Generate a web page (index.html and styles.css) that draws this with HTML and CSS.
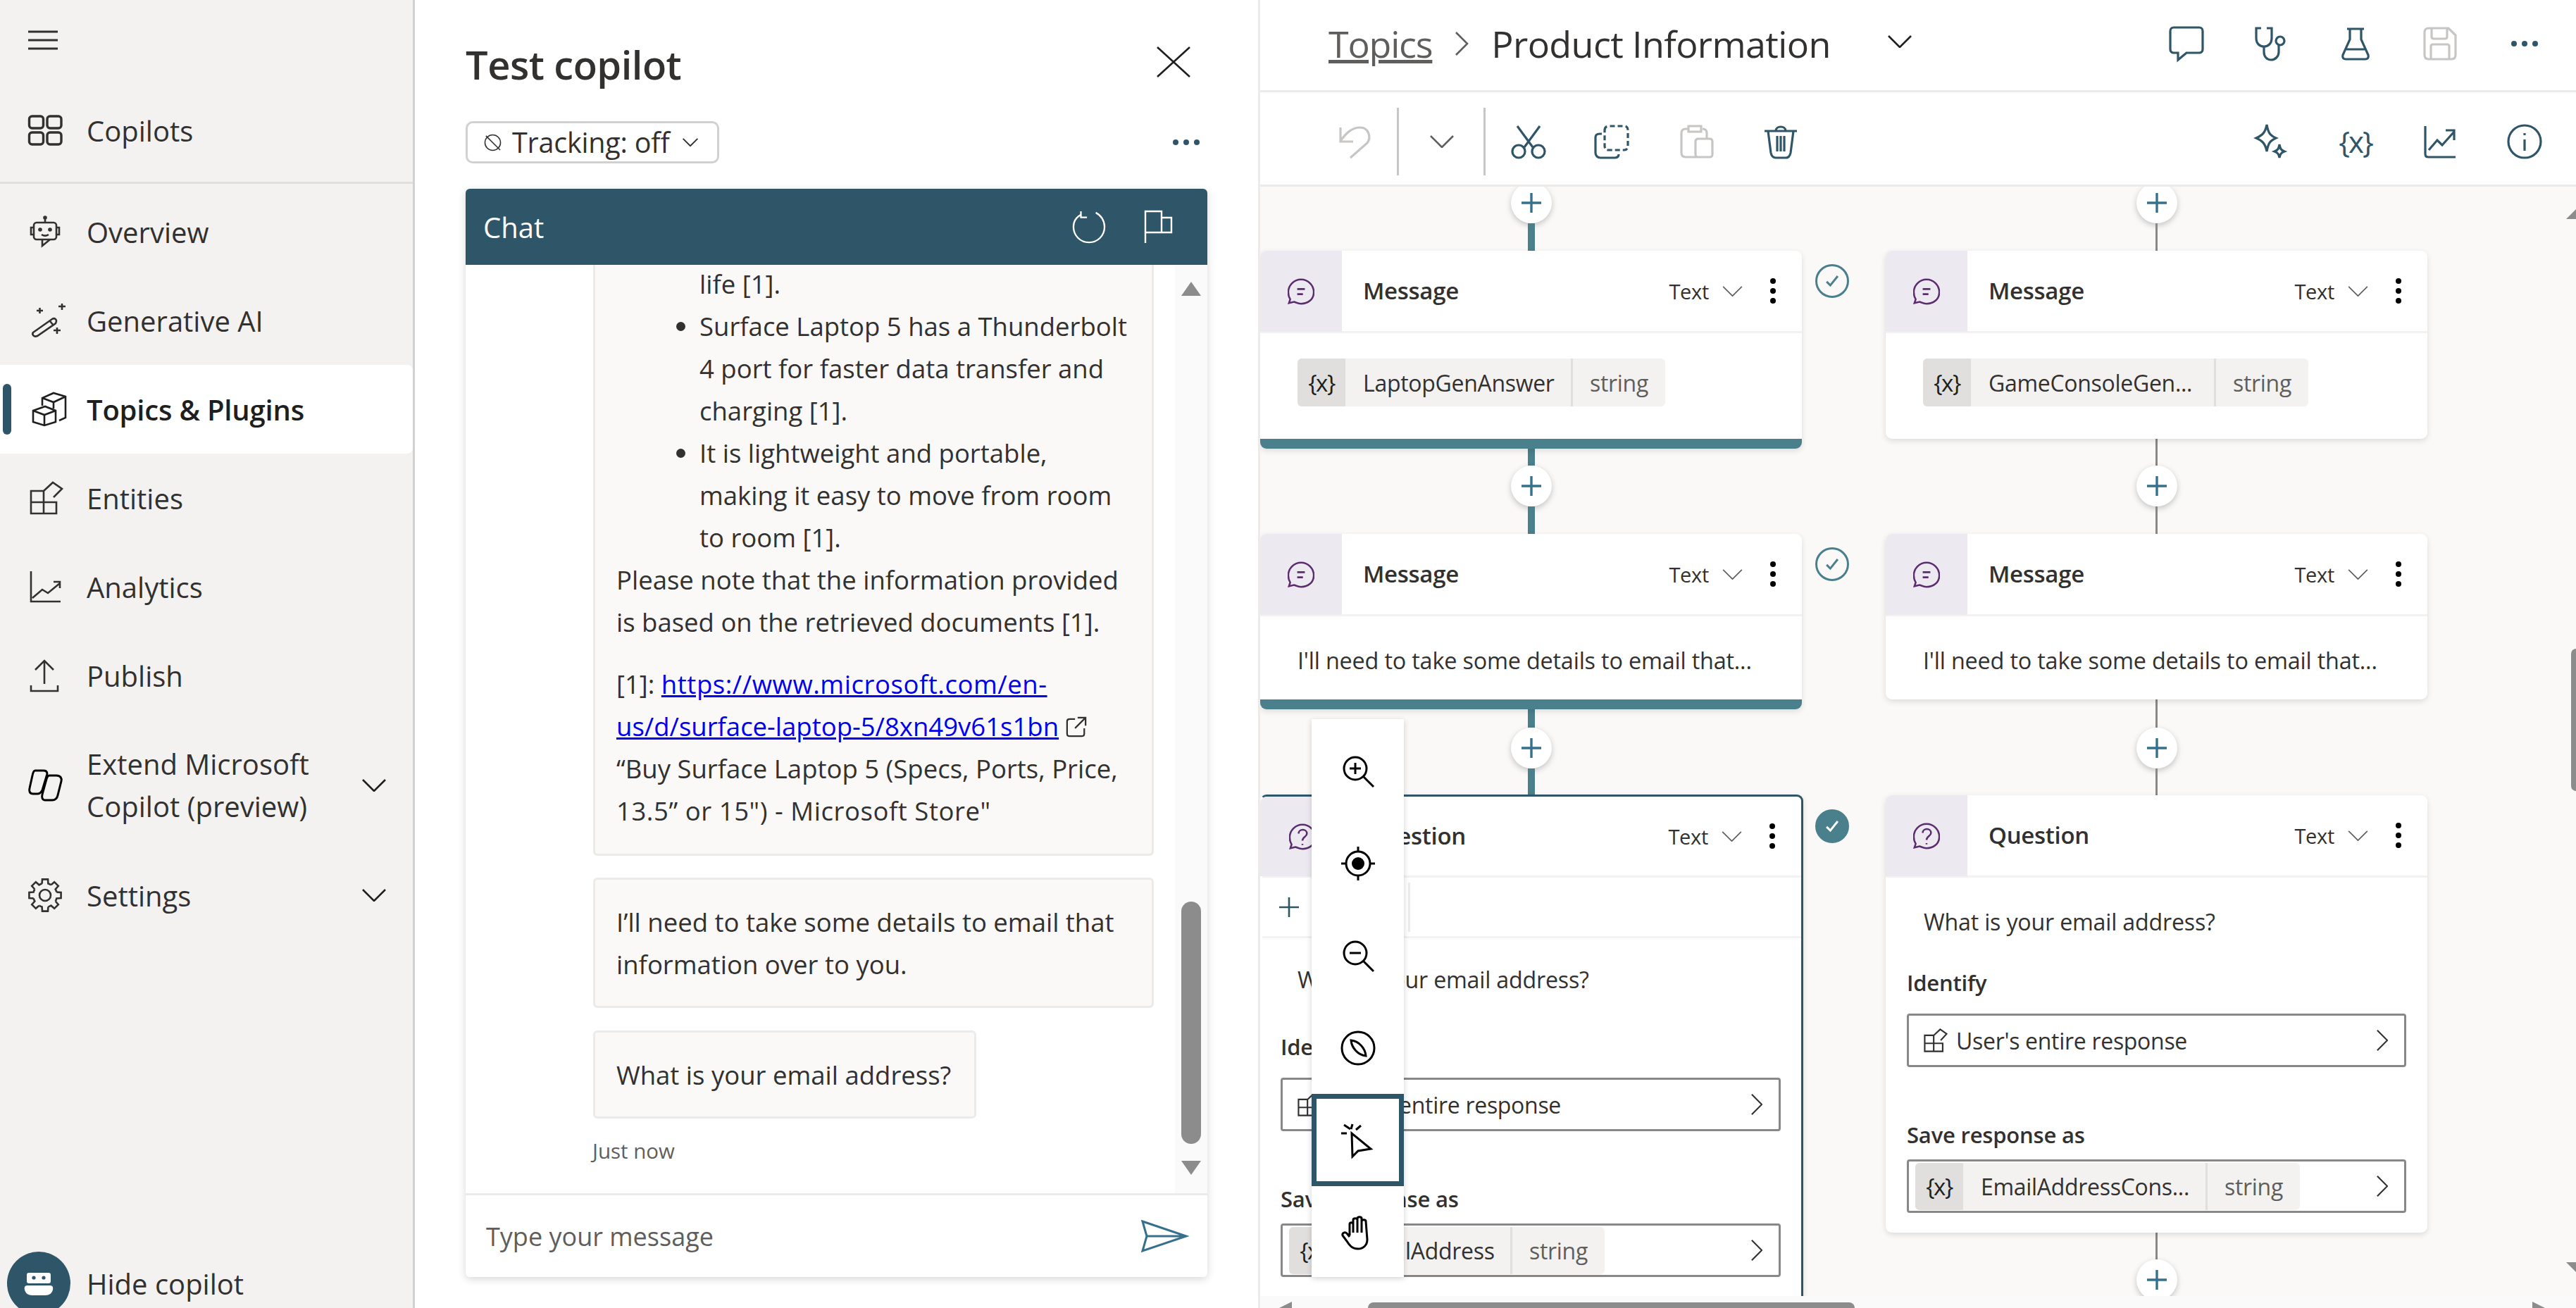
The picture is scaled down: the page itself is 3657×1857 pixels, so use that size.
FILE: index.html
```html
<!DOCTYPE html>
<html lang="en">
<head>
<meta charset="utf-8">
<title>Test copilot - Product Information</title>
<link rel="stylesheet" href="styles.css">
</head>
<body>
<svg class="defs" width="0" height="0">
  <defs>
    <symbol id="i-chev-d" viewBox="0 0 34 18"><path d="M1 1 17 17 33 1"/></symbol>
    <symbol id="i-chev-r" viewBox="0 0 18 34"><path d="M1 1 17 17 1 33"/></symbol>
    <symbol id="i-plus" viewBox="0 0 28 28"><path d="M14 0V28M0 14H28"/></symbol>
    <symbol id="i-msg" viewBox="0 0 42 40"><path d="M2 38 4 32C2 29 1 25 1 21 1 10 10 1 21 1S41 10 41 21 32 39 21 39C17 39 13 37 10 36Z"/><path d="M15 16H27M15 24H24"/></symbol>
    <symbol id="i-q" viewBox="0 0 42 40"><path d="M2 38 4 32C2 29 1 25 1 21 1 10 10 1 21 1S41 10 41 21 32 39 21 39C17 39 13 37 10 36Z"/><path d="M15 15C15 7 28 7 28 15 28 20 21 20 21 26M21 31V33"/></symbol>
    <symbol id="i-entity" viewBox="0 0 48 48"><path d="M2 14H20V46H2ZM2 30H38V46H20M20 14 33 2 46 11 34 24"/></symbol>
    <symbol id="i-check" viewBox="0 0 48 48"><path d="M15 25 21 31 33 16"/></symbol>
    <symbol id="i-hook" viewBox="0 0 48 48"><path id="gear-seg" d="M40.4 19.6 46.6 20V28L40.4 28.4A17 17 0 0 1 38.7 32.5"/></symbol>
  </defs>
</svg>

<div class="app">
  <nav class="sidebar">
    <div class="hamburger"><svg class="ic-menu" viewBox="0 0 42 26"><path d="M0 1H42M0 13H42M0 25H42"/></svg></div>
    <div class="nav-item nav-first">
      <svg class="nav-ic" viewBox="0 0 48 48"><rect x="1.5" y="4" width="20" height="17" rx="4"/><rect x="27" y="4" width="20" height="17" rx="4"/><rect x="1.5" y="27" width="20" height="17" rx="4"/><rect x="27" y="27" width="20" height="17" rx="4"/></svg>
      <span>Copilots</span>
    </div>
    <div class="nav-rule"></div>
    <div class="nav-item">
      <svg class="nav-ic" viewBox="0 0 48 48"><rect x="8" y="11" width="32" height="24" rx="4"/><path d="M8 18H4V28H8M40 18H44V28H40M24 11V6M20 35 20 44 31 35M19 28C22 30 26 30 29 28"/><circle cx="24" cy="4" r="1.5"/><circle cx="17" cy="21" r="1.5"/><circle cx="31" cy="21" r="1.5"/></svg>
      <span>Overview</span>
    </div>
    <div class="nav-item">
      <svg class="nav-ic" viewBox="-6 0 48 48"><path d="M1 41 28 22C31 20 36 22 33 28L7 46C2 48-1 44 1 41ZM25 25 30 31M6 10H15M10.500 6V14M37 4H47M42 0V9M30 38H40M35 34V43"/></svg>
      <span>Generative AI</span>
    </div>
    <div class="nav-item nav-active">
      <svg class="nav-ic" viewBox="-6 0 48 48"><path d="M1 26 18 20 33 26V42L17 47 1 42ZM1 26 17 32 33 26M17 32V47M14 19V8L30 1 47 6V36L38 40M14 8 30 14 47 6M30 14V23"/></svg>
      <span>Topics &amp; Plugins</span>
    </div>
    <div class="nav-item">
      <svg class="nav-ic" viewBox="-3 0 48 48"><path d="M1 14H19V46H1ZM1 30H37V46H19M19 14 32 2 45 11 33 23"/></svg>
      <span>Entities</span>
    </div>
    <div class="nav-item">
      <svg class="nav-ic" viewBox="-3 0 48 48"><path d="M1 2V45H43M3 40 17 28 25 33 42 19M33 17H42V26"/></svg>
      <span>Analytics</span>
    </div>
    <div class="nav-item">
      <svg class="nav-ic" viewBox="-3 0 48 48"><path d="M20 36V3M7 16 20 3 33 16M1 38V46H39V38"/></svg>
      <span>Publish</span>
    </div>
    <div class="nav-item nav-tall">
      <svg class="nav-ic nav-logo" viewBox="0 0 48 48"><path d="M10 3H22C27 3 28 7 26 11L20 31C18 35 16 36 13 36H7C2 36 1 32 2 28L6 10C7 5 8 3 10 3ZM30 10H40C46 10 48 14 47 18L42 38C41 43 38 45 34 45H24C20 45 19 41 20 37L26 15C27 12 28 10 30 10Z"/></svg>
      <span class="nav-grow">Extend Microsoft<br>Copilot (preview)</span>
      <svg class="nav-chev"><use href="#i-chev-d"/></svg>
    </div>
    <div class="nav-item">
      <svg class="nav-ic" viewBox="0 0 48 48"><g id="gear"><use href="#gear-seg"/><use href="#gear-seg" transform="rotate(45 24 24)"/><use href="#gear-seg" transform="rotate(90 24 24)"/><use href="#gear-seg" transform="rotate(135 24 24)"/><use href="#gear-seg" transform="rotate(180 24 24)"/><use href="#gear-seg" transform="rotate(225 24 24)"/><use href="#gear-seg" transform="rotate(270 24 24)"/><use href="#gear-seg" transform="rotate(315 24 24)"/></g><circle cx="24" cy="24" r="8"/></svg>
      <span class="nav-grow">Settings</span>
      <svg class="nav-chev"><use href="#i-chev-d"/></svg>
    </div>
    <div class="hide-copilot">
      <div class="avatar"><svg class="avatar-ic" viewBox="0 0 42 34"><path class="solid" d="M7 2H35A3 3 0 0 1 38 5V14A3 3 0 0 1 35 17H7A3 3 0 0 1 4 14V5A3 3 0 0 1 7 2ZM5 20H37C40 20 42 22 41 26 40 31 36 34 30 34H12C6 34 2 31 1 26 0 22 2 20 5 20Z"/><circle class="eye" cx="14" cy="9" r="2.6"/><circle class="eye" cx="28" cy="9" r="2.6"/></svg></div>
      <span>Hide copilot</span>
    </div>
  </nav>

  <section class="chat-pane">
    <header class="chat-title">
      <h1>Test copilot</h1>
      <svg class="ic-close" viewBox="0 0 48 44"><path d="M1 1 47 43M47 1 1 43"/></svg>
    </header>
    <div class="chat-tools">
      <button class="track"><svg class="ic-track" viewBox="0 0 26 26"><circle cx="13" cy="13" r="11.500"/><path d="M3 3 24 24"/></svg>Tracking: off<svg class="ic-track-chev"><use href="#i-chev-d"/></svg></button>
      <div class="dots"><i></i><i></i><i></i></div>
    </div>
    <div class="chat-frame">
      <div class="chat-head">
        <span>Chat</span>
        <svg class="ic-refresh" viewBox="0 0 48 48"><path d="M12 6C5 10 1 17 1 24 1 37 11 47 24 47S47 37 47 24C47 15 42 7 34 3M12 1V10H21"/></svg>
        <svg class="ic-flag" viewBox="0 0 40 46"><path d="M2 46V1H25V31H2M25 10H39V31H25"/></svg>
      </div>
      <div class="chat-body">
        <div class="chat-log">
          <div class="bubble bubble-top">
            <ul class="bul">
              <li class="cont">life [1].</li>
              <li>Surface Laptop 5 has a Thunderbolt<br>4 port for faster data transfer and<br>charging [1].</li>
              <li>It is lightweight and portable,<br>making it easy to move from room<br>to room [1].</li>
            </ul>
            <p>Please note that the information provided<br>is based on the retrieved documents [1].</p>
            <p class="refs">[1]: <a href="#"><span class="url-head">https://www.microsoft.com/en-</span><br>us/d/surface-laptop-5/8xn49v61s1bn</a> <svg class="ic-ext" viewBox="0 0 32 32"><path d="M14 4H6C3 4 2 5 2 8V26C2 29 3 30 6 30H24C27 30 28 29 28 26V18M18 2H30V14M30 2 14 18"/></svg><br>“Buy Surface Laptop 5 (Specs, Ports, Price,<br><span class="url-head">13.5” or 15") - Microsoft Store"</span></p>
          </div>
          <div class="bubble">I’ll need to take some details to email that<br>information over to you.</div>
          <div class="bubble bubble-fit">What is your email address?</div>
          <div class="stamp">Just now</div>
        </div>
        <div class="chat-scroll">
          <div class="arrow-up"></div>
          <div class="thumb"></div>
          <div class="arrow-down"></div>
        </div>
      </div>
      <div class="chat-input">
        <span>Type your message</span>
        <svg class="ic-send" viewBox="0 0 66 46"><path d="M2 2 64 23 2 44 8 23ZM8 23H64"/></svg>
      </div>
    </div>
  </section>

  <main class="editor">
    <div class="crumbs">
      <a class="crumb-link" href="#">Topics</a>
      <svg class="crumb-sep"><use href="#i-chev-r"/></svg>
      <span class="crumb-cur">Product Information</span>
      <svg class="crumb-chev"><use href="#i-chev-d"/></svg>
      <div class="tools tools-right">
        <svg class="tool" viewBox="0 0 48 48"><path d="M6 1H42C45 1 47 3 47 6V32C47 35 45 37 42 37H24L12 47V37H6C3 37 1 35 1 32V6C1 3 3 1 6 1Z"/></svg>
        <svg class="tool" viewBox="0 0 48 48"><path d="M10 2H3V16C3 24 8 28 14 28S25 24 25 16V2H18M14 28V36C14 42 18 47 24 47S35 42 35 36V26"/><circle cx="37" cy="20" r="6"/></svg>
        <svg class="tool" viewBox="0 0 48 48"><path d="M12 3H36M16 3V18L6 40C5 44 7 46 10 46H38C41 46 43 44 42 40L32 18V3M11 32H37"/></svg>
        <svg class="tool tool-off" viewBox="0 0 48 48"><path d="M8 2H36L46 12V40C46 44 44 46 40 46H8C4 46 2 44 2 40V8C2 4 4 2 8 2ZM12 2V14C12 16 13 17 15 17H31C33 17 34 16 34 14V2M11 46V28C11 26 12 25 14 25H34C36 25 37 26 37 28V46"/></svg>
        <div class="dots dots-top"><i></i><i></i><i></i></div>
      </div>
    </div>
    <div class="toolbar">
      <svg class="tool tool-off tool-undo" viewBox="0 0 48 48"><path d="M4 4V24H22M4 23C12 12 20 4 32 4 44 4 48 18 42 26L18 47" /></svg>
      <span class="tool-rule"></span>
      <svg class="tool-chev"><use href="#i-chev-d"/></svg>
      <span class="tool-rule"></span>
      <svg class="tool tool-cut" viewBox="0 0 48 48"><path d="M8 2 30 32M40 2 18 32"/><circle cx="10" cy="38" r="9"/><circle cx="38" cy="38" r="9"/></svg>
      <svg class="tool tool-copy" viewBox="0 0 48 48"><path stroke-dasharray="7 4" d="M14 8C14 4 16 2 20 2H42C45 2 47 4 47 8V30C47 34 45 36 42 36H20C16 36 14 34 14 30Z"/><path d="M10 13H7C3 13 1 15 1 18V40C1 44 4 47 8 47H28C32 47 34 45 34 42"/></svg>
      <svg class="tool tool-off tool-paste" viewBox="0 0 48 48"><path d="M28 46H8C4 46 2 44 2 40V12C2 8 4 6 8 6H12M32 6C36 6 38 8 38 12V20M12 2H30V10H12ZM26 20H42C45 20 46 22 46 24V42C46 45 45 46 42 46H26C23 46 22 45 22 42V24C22 22 23 20 26 20Z"/></svg>
      <svg class="tool tool-trash" viewBox="0 0 48 48"><path d="M1 9H47M17 9C17 1 31 1 31 9M6 9 10 40C11 45 13 47 17 47H31C35 47 37 45 38 40L42 9M19 16V38M29 16V38M24 16V38"/></svg>
      <div class="tools tools-right tools-second">
        <svg class="tool" viewBox="0 0 48 48"><path d="M18 0C20 11 22 15 31 19 22 23 20 27 18 38 16 27 12 23 3 19 12 15 16 11 18 0ZM36 28C37 34 38 36 43 38 38 40 37 42 36 47 35 42 34 40 29 38 34 36 35 34 36 28Z"/></svg>
        <span class="tool-var">{x}</span>
        <svg class="tool" viewBox="0 0 48 48"><path d="M3 2V41C3 45 4 46 8 46H46M8 36 20 22 27 29 44 10M32 8H44V22"/></svg>
        <svg class="tool" viewBox="0 0 48 48"><circle cx="24" cy="24" r="23"/><path d="M24 21V37M24 12V15"/></svg>
      </div>
    </div>

    <div class="canvas">
      <div class="flow flow-left">
        <div class="plus"><svg><use href="#i-plus"/></svg></div>
        <div class="link link-39"></div>
        <article class="card card-teal">
          <div class="card-head">
            <div class="card-ic"><svg><use href="#i-msg"/></svg></div>
            <h2>Message</h2>
            <span class="type">Text</span>
            <svg class="type-chev"><use href="#i-chev-d"/></svg>
            <div class="kebab"><i></i><i></i><i></i></div>
          </div>
          <div class="card-body">
            <div class="pill"><span class="pill-x">{x}</span><span class="pill-name">LaptopGenAnswer</span><span class="pill-type">string</span></div>
          </div>
          <div class="state"><svg><use href="#i-check"/></svg></div>
        </article>
        <div class="link link-24"></div>
        <div class="plus"><svg><use href="#i-plus"/></svg></div>
        <div class="link link-39"></div>
        <article class="card card-teal">
          <div class="card-head">
            <div class="card-ic"><svg><use href="#i-msg"/></svg></div>
            <h2>Message</h2>
            <span class="type">Text</span>
            <svg class="type-chev"><use href="#i-chev-d"/></svg>
            <div class="kebab"><i></i><i></i><i></i></div>
          </div>
          <div class="card-text">I'll need to take some details to email that...</div>
          <div class="state"><svg><use href="#i-check"/></svg></div>
        </article>
        <div class="link link-26"></div>
        <div class="plus"><svg><use href="#i-plus"/></svg></div>
        <div class="link link-37"></div>
        <article class="card card-sel">
          <div class="card-head">
            <div class="card-ic"><svg><use href="#i-q"/></svg></div>
            <h2>Question</h2>
            <span class="type">Text</span>
            <svg class="type-chev"><use href="#i-chev-d"/></svg>
            <div class="kebab"><i></i><i></i><i></i></div>
          </div>
          <div class="card-sub"><svg class="sub-plus"><use href="#i-plus"/></svg><span class="sub-rule"></span></div>
          <div class="q-body">
            <div class="q-text">What is your email address?</div>
            <div class="q-label">Identify</div>
            <div class="q-input"><svg class="q-entity"><use href="#i-entity"/></svg><span>User's entire response</span><svg class="q-chev"><use href="#i-chev-r"/></svg></div>
            <div class="q-label q-label-2">Save response as</div>
            <div class="q-input q-input-2"><div class="pill pill-in"><span class="pill-x">{x}</span><span class="pill-name">EmailAddress</span><span class="pill-type">string</span></div><svg class="q-chev"><use href="#i-chev-r"/></svg></div>
          </div>
          <div class="state state-on"><svg><use href="#i-check"/></svg></div>
        </article>
      </div>

      <div class="flow flow-right">
        <div class="plus"><svg><use href="#i-plus"/></svg></div>
        <div class="link link-thin link-39"></div>
        <article class="card">
          <div class="card-head">
            <div class="card-ic"><svg><use href="#i-msg"/></svg></div>
            <h2>Message</h2>
            <span class="type">Text</span>
            <svg class="type-chev"><use href="#i-chev-d"/></svg>
            <div class="kebab"><i></i><i></i><i></i></div>
          </div>
          <div class="card-body">
            <div class="pill pill-game"><span class="pill-x">{x}</span><span class="pill-name">GameConsoleGen...</span><span class="pill-type">string</span></div>
          </div>
        </article>
        <div class="link link-thin link-38"></div>
        <div class="plus"><svg><use href="#i-plus"/></svg></div>
        <div class="link link-thin link-39"></div>
        <article class="card">
          <div class="card-head">
            <div class="card-ic"><svg><use href="#i-msg"/></svg></div>
            <h2>Message</h2>
            <span class="type">Text</span>
            <svg class="type-chev"><use href="#i-chev-d"/></svg>
            <div class="kebab"><i></i><i></i><i></i></div>
          </div>
          <div class="card-text">I'll need to take some details to email that...</div>
        </article>
        <div class="link link-thin link-40"></div>
        <div class="plus"><svg><use href="#i-plus"/></svg></div>
        <div class="link link-thin link-38"></div>
        <article class="card">
          <div class="card-head">
            <div class="card-ic"><svg><use href="#i-q"/></svg></div>
            <h2>Question</h2>
            <span class="type">Text</span>
            <svg class="type-chev"><use href="#i-chev-d"/></svg>
            <div class="kebab"><i></i><i></i><i></i></div>
          </div>
          <div class="q-body">
            <div class="q-text">What is your email address?</div>
            <div class="q-label">Identify</div>
            <div class="q-input"><svg class="q-entity"><use href="#i-entity"/></svg><span>User's entire response</span><svg class="q-chev"><use href="#i-chev-r"/></svg></div>
            <div class="q-label q-label-2">Save response as</div>
            <div class="q-input q-input-2"><div class="pill pill-in"><span class="pill-x">{x}</span><span class="pill-name">EmailAddressCons...</span><span class="pill-type">string</span></div><svg class="q-chev"><use href="#i-chev-r"/></svg></div>
          </div>
        </article>
        <div class="link link-thin link-38"></div>
        <div class="plus"><svg><use href="#i-plus"/></svg></div>
      </div>

      <div class="zoombar">
        <div class="zoom-btn"><svg viewBox="0 0 48 48"><circle cx="20" cy="20" r="16"/><path d="M12 20H28M20 12V28M32 32 46 46"/></svg></div>
        <div class="zoom-btn"><svg viewBox="0 0 48 48"><circle cx="24" cy="24" r="17"/><circle class="solid-k" cx="24" cy="24" r="9"/><path d="M24 0V7M24 41V48M0 24H7M41 24H48"/></svg></div>
        <div class="zoom-btn"><svg viewBox="0 0 48 48"><circle cx="20" cy="20" r="16"/><path d="M12 20H28M32 32 46 46"/></svg></div>
        <div class="zoom-btn"><svg viewBox="0 0 48 48"><circle cx="24" cy="24" r="23"/><path d="M14 13C25 14 34 24 35 35 24 34 15 24 14 13Z"/></svg></div>
        <div class="zoom-btn zoom-sel"><svg viewBox="0 0 48 48"><path d="M15 14 16 47 24 39 42 36ZM4 2 13 8M16 1 14 8M28 3 21 9M0 14H8"/></svg></div>
        <div class="zoom-btn"><svg viewBox="0 0 48 48"><path d="M12 28V12C12 9 17 9 17 12V24M17 24V6C17 3 23 3 23 6V24M23 24V4C23 1 29 1 29 4V24M29 24V8C29 5 35 5 35 8 L37 34C37 42 31 47 24 47 15 47 11 41 8 36L2 28C1 25 5 22 8 25L12 30"/></svg></div>
      </div>

      <div class="vscroll">
        <div class="vs-up"></div>
        <div class="vs-thumb"></div>
        <div class="vs-down"></div>
      </div>
      <div class="hscroll">
        <div class="hs-left"></div>
        <div class="hs-thumb"></div>
        <div class="hs-right"></div>
      </div>
    </div>
  </main>
</div>
</body>
</html>
```

FILE: styles.css
```css
* { box-sizing: border-box; }
html, body { margin: 0; padding: 0; width: 3657px; height: 1857px; overflow: hidden; background: #fff; }
body { font-family: "Open Sans", "Noto Sans", sans-serif; color: #323130; }
svg { fill: none; stroke: currentColor; stroke-width: 3; display: block; flex: none; overflow: visible; }
.defs { position: absolute; }
h1, h2, p, ul { margin: 0; padding: 0; }

.app { display: flex; width: 3657px; height: 1857px; }

/* Sidebar */
.sidebar { width: 589px; height: 1857px; flex: none; background: #f3f2f1; border-right: 3px solid #d1d1d1; display: flex; flex-direction: column; overflow: hidden; font-size: 40px; }
.hamburger { height: 122px; padding: 44px 0 0 40px; }
.ic-menu { width: 42px; height: 26px; stroke-width: 3; }
.nav-item { display: flex; align-items: center; height: 126px; padding-left: 40px; position: relative; }
.nav-ic { width: 48px; height: 48px; margin-right: 35px; stroke-width: 2.6; }
.nav-first .nav-ic { stroke-width: 3.4; }
.nav-logo { stroke-width: 3; color: #000; }
.nav-rule { height: 3px; margin: 10px 0 5px; background: #e1dfdd; }
.nav-active { background: #fff; border-radius: 0 8px 8px 0; font-weight: 600; color: #201f1e; letter-spacing: -.2px; }
.nav-active::before { content: ""; position: absolute; left: 4px; top: 27px; width: 12px; height: 72px; border-radius: 6px; background: #2f5568; }
.nav-tall { height: 186px; line-height: 60px; }
.nav-grow { flex: 1; }
.nav-chev { width: 34px; height: 18px; margin-right: 38px; color: #201f1e; stroke-width: 2.6; }
.hide-copilot { margin-top: auto; margin-bottom: -10px; height: 90px; padding-left: 10px; display: flex; align-items: center; gap: 23px; }
.avatar { width: 90px; height: 90px; border-radius: 50%; background: #2f5568; display: flex; align-items: center; justify-content: center; }
.avatar-ic { width: 42px; height: 34px; stroke: none; }
.avatar-ic .solid { fill: #fff; }
.avatar-ic .eye { fill: #2f5568; }

/* Chat pane */
.chat-pane { width: 1200px; flex: none; border-right: 3px solid #edebe9; padding: 61px 0 0 72px; display: flex; flex-direction: column; background: #fff; }
.chat-title { display: flex; justify-content: space-between; align-items: flex-start; width: 1029px; height: 60px; }
.chat-title h1 { font-size: 56px; font-weight: 600; line-height: 60px; color: #323130; letter-spacing: -.5px; }
.ic-close { width: 48px; height: 46px; margin-top: 4px; stroke-width: 2.6; color: #201f1e; }
.chat-tools { display: flex; align-items: center; justify-content: space-between; width: 1053px; height: 60px; margin-top: 51px; }
.track { display: flex; align-items: center; width: 360px; height: 60px; padding: 0 0 0 23px; background: #fff; border: 3px solid #d1d1d1; border-radius: 10px; font: 400 39.5px "Open Sans", sans-serif; letter-spacing: -.2px; color: #323130; white-space: nowrap; }
.ic-track { width: 25px; height: 25px; margin-right: 15px; stroke-width: 1.6; color: #323130; }
.ic-track-chev { width: 22px; height: 12px; margin-left: 18px; stroke-width: 3; }
.dots { display: flex; gap: 7px; margin-right: 11px; }
.dots i { width: 8px; height: 8px; border-radius: 50%; background: #2f5568; }
.chat-frame { width: 1053px; height: 1545px; margin-top: 36px; display: flex; flex-direction: column; border-radius: 6px; box-shadow: 0 3px 12px rgba(0,0,0,.16); background: #fff; overflow: hidden; }
.chat-head { height: 108px; flex: none; background: #2f5568; color: #fff; display: flex; align-items: center; padding-left: 25px; font-size: 40px; }
.chat-head span { flex: 1; }
.ic-refresh { width: 48px; height: 46px; margin-right: 54px; stroke-width: 2.4; }
.ic-flag { width: 40px; height: 46px; margin-right: 50px; stroke-width: 2.4; }
.chat-body { flex: 1; display: flex; min-height: 0; }
.chat-log { flex: 1; padding: 0 30px 0 181px; overflow: hidden; font-size: 36.5px; line-height: 60px; color: #323130; white-space: nowrap; }
.bubble { background: #faf9f8; border: 3px solid #edebe9; border-radius: 6px; padding: 30px 30px 29px; margin-bottom: 32px; }
.bubble-top { border-top: 0; border-radius: 0 0 6px 6px; padding-top: 0; padding-bottom: 31px; margin-bottom: 31px; }
.bubble-fit { width: 544px; margin-bottom: 16px; }
.bul { padding-left: 118px; margin-top: -3px; }
.bul li.cont { list-style: none; }
.refs { margin-top: 28px; }
.refs a { color: #0000ee; }
.url-head { letter-spacing: .55px; }
.ic-ext { display: inline-block; width: 30px; height: 30px; color: #323130; stroke-width: 2.4; vertical-align: -2px; }
.stamp { font-size: 29.5px; line-height: 60px; color: #605e5c; margin-left: -1px; }
.chat-scroll { width: 46px; flex: none; background: #fafafa; padding: 24px 9px 0; }
.arrow-up, .arrow-down { width: 28px; height: 20px; background: #8c8c8c; }
.arrow-up { clip-path: polygon(50% 0, 100% 100%, 0 100%); }
.arrow-down { clip-path: polygon(0 0, 100% 0, 50% 100%); margin-top: 24px; }
.thumb { width: 28px; height: 344px; margin-top: 860px; border-radius: 14px; background: #8c8c8c; }
.chat-input { height: 119px; flex: none; border-top: 3px solid #edebe9; display: flex; align-items: center; justify-content: space-between; padding: 0 28px 0 29px; font-size: 36px; color: #605e5c; }
.ic-send { width: 66px; height: 46px; color: #36708c; stroke-width: 3; }

/* Editor */
.editor { flex: 1; min-width: 0; display: flex; flex-direction: column; }
.crumbs { height: 131px; flex: none; display: flex; align-items: center; padding: 0 0 5px 97px; border-bottom: 3px solid #edebe9; font-size: 52px; }
.crumb-link { color: #605e5c; letter-spacing: -1.2px; }
.crumb-sep { width: 20px; height: 34px; margin: 0 32px; color: #605e5c; stroke-width: 2.6; }
.crumb-cur { color: #323130; letter-spacing: -.6px; }
.crumb-chev { width: 34px; height: 18px; margin-left: 81px; color: #201f1e; stroke-width: 2.6; margin-top: -6px; }
.tools { display: flex; align-items: center; }
.tools-right { margin-left: auto; gap: 72px; padding-right: 54px; }
.tool { width: 48px; height: 48px; color: #2f5568; stroke-width: 3.2; }
.tool-off { color: #c8c6c4; }
.dots-top { gap: 7px; margin: 0 0 0 5px; }
.dots-top i { width: 8px; height: 8px; }
.toolbar { height: 134px; flex: none; display: flex; align-items: center; padding: 8px 0 0 110px; border-bottom: 3px solid #edebe9; }
.tool-rule { width: 3px; height: 96px; background: #c8c6c4; }
.tool-undo { margin-right: 36px; }
.tool-chev { width: 34px; height: 18px; margin: 0 42px 0 44px; color: #605e5c; stroke-width: 2.6; }
.tool-cut { margin-left: 37px; }
.tool-copy { margin-left: 70px; }
.tool-paste { margin-left: 73px; }
.tool-trash { margin-left: 71px; }
.tools-second { gap: 72px; padding-right: 49px; }
.tool-var { width: 48px; text-align: center; font-size: 42px; font-weight: 400; color: #2f5568; line-height: 48px; letter-spacing: -2px; white-space: nowrap; }

/* Canvas */
.canvas { flex: 1; position: relative; overflow: hidden; background: #faf9f8; }
.flow { position: absolute; top: -6px; width: 769px; display: flex; flex-direction: column; align-items: center; }
.flow-left { left: 0; }
.flow-right { left: 888px; }
.plus { width: 58px; height: 58px; flex: none; border-radius: 50%; background: #fff; box-shadow: 0 3px 9px rgba(0,0,0,.22); display: flex; align-items: center; justify-content: center; color: #36708c; }
.plus svg { width: 28px; height: 28px; stroke-width: 3.4; }
.link { width: 10px; background: #4a7f8c; flex: none; }
.link-thin { width: 3px; background: #8a8886; }
.link-24 { height: 24px; }
.link-26 { height: 26px; }
.link-37 { height: 37px; }
.link-38 { height: 38px; }
.link-39 { height: 39px; }
.link-40 { height: 40px; }

.card { width: 769px; flex: none; position: relative; background: #fff; border-radius: 9px; box-shadow: 0 3px 9px rgba(0,0,0,.12); }
.card-teal { border-bottom: 14px solid #4a7f8c; }
.card-sel { width: 771px; align-self: flex-start; height: 900px; border: 3px solid #2f5568; border-left-color: transparent; }
.card-sel .card-ic { margin-left: -3px; width: 119px; }
.card-sel .card-head { height: 115px; }
.card-head { height: 117px; display: flex; align-items: center; border-bottom: 3px solid #f3f2f1; }
.card-ic { width: 116px; align-self: stretch; background: #ede9f1; display: flex; align-items: center; justify-content: center; color: #5c2d6e; border-top-left-radius: 9px; margin-bottom: -1px; }
.card-ic svg { width: 38px; height: 40px; stroke-width: 2.8; }
.card h2 { margin: -2px 0 0 30px; font-size: 33px; font-weight: 600; color: #323130; letter-spacing: -.3px; flex: 1; }
.type { font-size: 29px; letter-spacing: -.3px; color: #323130; }
.type-chev { width: 29px; height: 15px; margin: 0 39px 0 19px; stroke-width: 2; color: #605e5c; }
.kebab { display: flex; flex-direction: column; gap: 6px; width: 8px; margin-right: 37px; }
.kebab i { width: 8px; height: 8px; border-radius: 50%; background: #000; }
.card-body { padding: 36px 0 46px 53px; }
.card-text { padding: 32px 0 26px 53px; font-size: 32.4px; line-height: 60px; letter-spacing: -.2px; white-space: nowrap; }
.pill { display: flex; align-items: center; width: 522px; height: 68px; background: #f3f2f1; border-radius: 6px; overflow: hidden; font-size: 32px; letter-spacing: -.3px; }
.pill-game { width: 547px; }
.pill-x { width: 68px; align-self: stretch; background: #e1dfdd; display: flex; align-items: center; justify-content: center; flex: none; font-size: 33px; font-weight: 400; letter-spacing: -1.5px; color: #201f1e; }
.pill-name { flex: 1; padding-left: 25px; white-space: nowrap; min-width: 0; }
.pill-type { width: 134px; height: 100%; flex: none; display: flex; align-items: center; padding-left: 24px; border-left: 3px solid #e1dfdd; color: #605e5c; }
.state { position: absolute; right: -67px; top: 19px; width: 48px; height: 48px; border-radius: 50%; border: 3px solid #4a7f8c; color: #4a7f8c; }
.state svg { width: 42px; height: 42px; stroke-width: 3.4; }
.state-on { background: #4a7f8c; color: #fff; right: -68px; top: 18px; }
.card-sub { height: 86px; display: flex; align-items: center; border-bottom: 3px solid #f3f2f1; padding-left: 24px; }
.sub-plus { width: 28px; height: 28px; color: #2f5568; stroke-width: 2.6; }
.sub-rule { width: 3px; height: 70px; margin-left: 155px; background: #edebe9; }

.q-body { padding: 0 30px 28px; }
.card-sel .q-body { padding: 0 29px 0 26px; }
.q-text { margin: 33px 0 0 24px; line-height: 60px; font-size: 32.2px; letter-spacing: -.2px; white-space: nowrap; }
.q-label { margin-top: 31px; line-height: 50px; font-size: 31px; font-weight: 600; letter-spacing: -.2px; }
.card-sel .q-text { margin-top: 29px; }
.card-sel .q-label { margin-top: 40px; }
.q-label-2, .card-sel .q-label-2 { margin-top: 71px; }
.q-input { height: 76px; margin-top: 19px; border: 3px solid #8a8886; border-radius: 4px; display: flex; align-items: center; padding: 0 23px 0 21px; font-size: 32px; letter-spacing: -.3px; }
.q-input span { white-space: nowrap; }
.q-entity { width: 34px; height: 34px; margin-right: 12px; stroke-width: 3; color: #323130; }
.q-chev { width: 16px; height: 32px; margin-left: auto; stroke-width: 2.4; color: #323130; flex: none; }
.q-input-2 { margin-top: 10px; padding-left: 9px; }
.pill-in { width: 546px; height: 67px; }
.card-sel .pill-in { width: 448px; }
.pill-in .pill-type { width: 134px; }

/* Floating zoom bar */
.zoombar { position: absolute; left: 73px; top: 756px; width: 131px; height: 792px; background: #fff; box-shadow: 0 2px 8px rgba(0,0,0,.18); display: flex; flex-direction: column; padding-top: 8px; color: #000; }
.zoom-btn { height: 131px; display: flex; align-items: center; justify-content: center; flex: none; }
.zoom-btn svg { width: 48px; height: 48px; stroke-width: 3; }
.zoom-btn .solid-k { fill: #000; stroke: none; }
.zoom-sel { border: 7px solid #2f5568; }

/* Canvas scrollbars */
.vscroll { position: absolute; right: 0; top: 0; bottom: 17px; width: 17px; background: #faf9f8; }
.vs-up, .vs-down { position: absolute; right: 0; width: 14px; height: 14px; background: #8c8c8c; }
.vs-up { top: 32px; clip-path: polygon(100% 0, 100% 100%, 0 100%); }
.vs-down { bottom: 34px; clip-path: polygon(0 0, 100% 0, 100% 100%); }
.vs-thumb { position: absolute; right: 0; top: 656px; width: 7px; height: 202px; border-radius: 7px 0 0 7px; background: #8c8c8c; }
.hscroll { position: absolute; left: 0; right: 0; bottom: 0; height: 17px; background: #fafafa; }
.hs-left, .hs-right { position: absolute; bottom: 0; width: 18px; height: 9px; background: #8c8c8c; }
.hs-left { left: 27px; clip-path: polygon(100% 0, 100% 100%, 0 100%); }
.hs-right { left: 1806px; clip-path: polygon(0 0, 100% 100%, 0 100%); }
.hs-thumb { position: absolute; left: 153px; bottom: 0; width: 691px; height: 8px; border-radius: 8px 8px 0 0; background: #8c8c8c; }
```
